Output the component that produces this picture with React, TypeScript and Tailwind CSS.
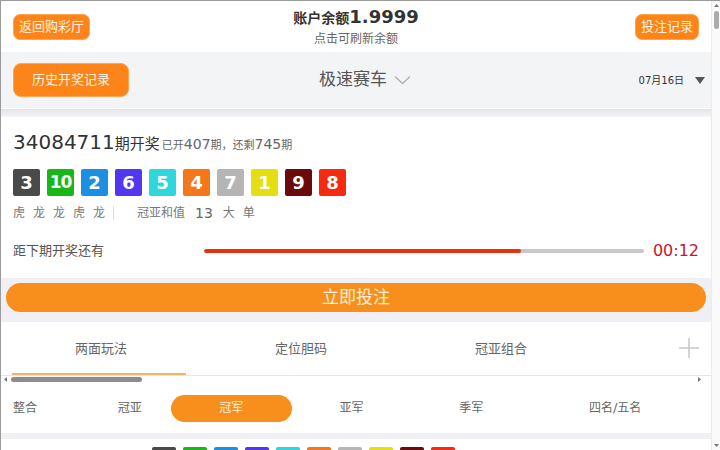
import { Fragment } from "react";

// 本期开奖号码及对应颜色
const balls = [
    { n: 3, c: "bg-[#4a4a4a]" },
    { n: 10, c: "bg-[#16b716]" },
    { n: 2, c: "bg-[#1b8fe0]" },
    { n: 6, c: "bg-[#5138f0]" },
    { n: 5, c: "bg-[#2fd6dc]" },
    { n: 4, c: "bg-[#f5771a]" },
    { n: 7, c: "bg-[#b5b5b5]" },
    { n: 1, c: "bg-[#e5de10]" },
    { n: 9, c: "bg-[#6a0a0a]" },
    { n: 8, c: "bg-[#f52a10]" },
];

const dragonTiger = ["虎", "龙", "龙", "虎", "龙"];

const tabs = ["两面玩法", "定位胆码", "冠亚组合"];

export default function App() {
    return (
        <div className="w-[720px] h-[450px] overflow-hidden flex bg-white border-t border-l border-[#9a9a9a] font-['DejaVu_Sans','Noto_Sans_CJK_SC',sans-serif]">
            <div className="flex-1 min-w-0 flex flex-col">
                {/* Header */}
                <header className="h-[51px] shrink-0 grid grid-cols-[1fr_auto_1fr] items-center px-3">
                    <div>
                        <button className="h-[26px] px-[5px] rounded-[7px] bg-[#fd8418] border border-[#ffa552] text-[13px] leading-none text-[#fff3e2]">
                            返回购彩厅
                        </button>
                    </div>
                    <div className="flex flex-col items-center">
                        <div className="flex items-baseline font-bold text-[#333] leading-[22px]">
                            <span className="text-[14px]">账户余额</span>
                            <span className="text-[18px]">1.9999</span>
                        </div>
                        <div className="mt-[2px] text-[12px] leading-[16px] text-[#666]">点击可刷新余额</div>
                    </div>
                    <div className="flex justify-end">
                        <button className="h-[26px] px-[5px] rounded-[7px] bg-[#fd8418] border border-[#ffa552] text-[13px] leading-none text-[#fff3e2]">
                            投注记录
                        </button>
                    </div>
                </header>

                {/* Game selector bar */}
                <div className="h-[57px] shrink-0 grid grid-cols-[1fr_auto_1fr] items-center pl-3 pr-[6px] bg-[#f3f4f6] border-b border-[#fafafa]">
                    <div>
                        <button className="w-[116px] h-[34px] rounded-[8px] bg-[#fd8418] border border-[#ffa552] text-[13px] text-[#fff3e2]">
                            历史开奖记录
                        </button>
                    </div>
                    <div className="flex items-center gap-[7px] pl-[12px]">
                        <span className="text-[17px] text-[#555]">极速赛车</span>
                        <svg width="17" height="10" viewBox="0 0 17 10" fill="none">
                            <path d="M1 1.5l7.5 7 7.5-7" stroke="#b0b0b0" strokeWidth="1.3" />
                        </svg>
                    </div>
                    <div className="flex justify-end items-center gap-[11px]">
                        <span className="text-[10px] text-[#333]">07月16日</span>
                        <svg width="10" height="7" viewBox="0 0 10 7">
                            <path d="M0 0h10L5 7z" fill="#555" />
                        </svg>
                    </div>
                </div>
                <div className="h-[8px] shrink-0 bg-linear-to-b from-[#e3e3e9] to-[#f6f6f8]" />

                {/* Latest draw */}
                <section className="shrink-0 px-3 pt-3 pb-[17px] bg-white">
                    <div className="flex items-baseline leading-[26px] text-[#333]">
                        <span className="text-[20px]">34084711</span>
                        <span className="text-[15px]">期开奖</span>
                        <span className="ml-[2px] text-[#666]">
                            <span className="text-[11px]">已开</span>
                            <span className="text-[14px]">407</span>
                            <span className="text-[11px]">期，还剩</span>
                            <span className="text-[14px]">745</span>
                            <span className="text-[11px]">期</span>
                        </span>
                    </div>
                    <div className="mt-[10px] flex gap-[7px]">
                        {balls.map((b) => (
                            <div
                                key={b.n}
                                className={`w-[27px] h-[27px] rounded-[2px] flex items-center justify-center text-white font-bold leading-none ${b.c} ${
                                    b.n === 10 ? "text-[17px] tracking-[-1px]" : "text-[18px]"
                                }`}
                            >
                                {b.n}
                            </div>
                        ))}
                    </div>
                    <div className="mt-[8px] h-[18px] flex items-center text-[#777]">
                        {dragonTiger.map((d, i) => (
                            <span key={i} className="w-[20px] text-[12px]">
                                {d}
                            </span>
                        ))}
                        <span className="w-px h-[14px] bg-[#dddddd]" />
                        <span className="ml-[23px] text-[12px]">冠亚和值</span>
                        <span className="ml-[10px] text-[14px] text-[#666]">13</span>
                        <span className="ml-[10px] text-[12px]">大</span>
                        <span className="ml-[8px] text-[12px]">单</span>
                    </div>
                    <div className="mt-[19px] h-[20px] flex items-center">
                        <span className="w-[191px] shrink-0 text-[13px] text-[#555]">距下期开奖还有</span>
                        <div className="flex-1 h-[4px] rounded-full bg-[#c8c8ca] overflow-hidden">
                            <div className="w-[72%] h-full rounded-full bg-[#e8310f]" />
                        </div>
                        <span className="ml-[9px] text-[16px] text-[#c9132f]">00:12</span>
                    </div>
                </section>

                {/* Bet button */}
                <div className="h-[44px] shrink-0 flex items-start pt-[5px] px-[5px] bg-[#efeff5]">
                    <button className="w-full h-[29px] rounded-full bg-[#f88f1c] text-[17px] text-[#fff0dd]">立即投注</button>
                </div>

                {/* Play type tabs */}
                <div className="h-[53px] shrink-0 flex">
                    {tabs.map((t, i) => (
                        <div key={t} className="w-[200px] flex flex-col">
                            <div className="flex-1 flex items-center justify-center pt-[3px] text-[13px] text-[#666]">{t}</div>
                            <div className={`ml-[11px] w-[174px] h-[2px] ${i === 0 ? "bg-[#f6b26b]" : ""}`} />
                        </div>
                    ))}
                    <div className="ml-auto mr-[11px] pb-[2px] flex items-center">
                        <svg width="22" height="22" viewBox="0 0 22 22">
                            <path d="M11 1v20M1 11h20" stroke="#c8c8c8" strokeWidth="1.6" />
                        </svg>
                    </div>
                </div>
                <div className="h-px shrink-0 bg-[#e6e6e6]" />
                <div className="h-[7px] shrink-0 flex items-center pl-[3px] pr-[10px]">
                    <svg width="3" height="5" viewBox="0 0 3 5">
                        <path d="M3 0v5L0 2.5z" fill="#777" />
                    </svg>
                    <div className="ml-[4px] w-[131px] h-[5px] rounded-full bg-[#8c8c8c]" />
                    <svg className="ml-auto" width="3" height="5" viewBox="0 0 3 5">
                        <path d="M0 0v5l3-2.5z" fill="#777" />
                    </svg>
                </div>

                {/* Position sub tabs */}
                <div className="h-[50px] shrink-0 flex items-center px-3 text-[12px] text-[#666]">
                    <span className="w-[76px]">整合</span>
                    <span className="w-[82px] text-center">冠亚</span>
                    <span className="w-[121px] h-[27px] rounded-full bg-[#f88f1c] text-[#fff0dd] flex items-center justify-center">
                        冠军
                    </span>
                    <span className="w-[120px] text-center">亚军</span>
                    <span className="w-[120px] text-center">季军</span>
                    <span className="w-[168px] text-center">
                        <Fragment>四名</Fragment>
                        <span className="text-[13px]">/</span>
                        <Fragment>五名</Fragment>
                    </span>
                </div>
                <div className="h-[6px] shrink-0 bg-[#f1f1f5]" />

                {/* Next list row, mostly below the fold */}
                <div className="shrink-0 pt-[8px] pl-[151px] flex gap-[7px]">
                    {balls.map((b) => (
                        <div key={b.n} className={`w-[24px] h-[24px] rounded-[2px] ${b.c}`} />
                    ))}
                </div>
            </div>

            {/* Page scrollbar */}
            <div className="w-[9px] shrink-0 flex flex-col items-center bg-[#fafafa] border-l border-[#ececec]">
                <svg className="mt-[3px]" width="5" height="3" viewBox="0 0 5 3">
                    <path d="M0 3h5L2.5 0z" fill="#777" />
                </svg>
                <div className="mt-[4px] w-[5px] h-[18px] rounded-full bg-[#ababab]" />
                <div className="flex-1" />
                <svg className="mb-[3px]" width="5" height="3" viewBox="0 0 5 3">
                    <path d="M0 0h5L2.5 3z" fill="#777" />
                </svg>
            </div>
        </div>
    );
}
